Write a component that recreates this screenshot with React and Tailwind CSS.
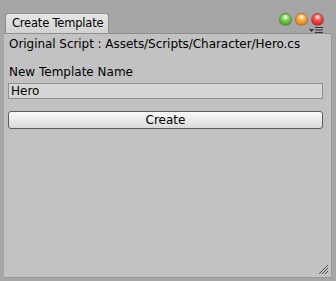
import { useState } from "react";

function Light({ from, to }) {
  return (
    <span
      className="w-[13px] h-[13px] rounded-full border border-[#6b6b6b]/60"
      style={{ background: `radial-gradient(circle at 50% 30%, #ffffff 0%, ${from} 35%, ${to} 100%)` }}
    />
  );
}

export default function App() {
  const [name, setName] = useState("Hero");

  return (
    <div
      className="w-[336px] h-[281px] bg-[#a6a6a6] flex flex-col text-[12px] text-black overflow-hidden"
      style={{ fontFamily: '"DejaVu Sans", Verdana, sans-serif' }}
    >
      {/* title strip */}
      <div className="h-[33px] flex items-end pl-[5px] pr-[5px] relative">
        <div className="h-[20px] pl-[6px] pr-[5px] text-[11.5px] tracking-[-0.2px] whitespace-nowrap flex items-center bg-gradient-to-b from-[#e6e6e6] to-[#d2d2d2] border border-b-0 border-[#8e8e8e] rounded-t-[3px]">
          Create Template
        </div>
        <div className="absolute right-[12px] top-[13px] flex gap-[3px]">
          <Light from="#7dd44a" to="#2f8a14" />
          <Light from="#ffb13b" to="#d0620a" />
          <Light from="#ff4f4f" to="#b30d0d" />
        </div>
        <div className="absolute right-[13px] top-[27px] flex items-center gap-[1px]">
          <svg width="5" height="3" viewBox="0 0 5 3"><path d="M0 0h5L2.5 3z" fill="#333" /></svg>
          <svg width="8" height="6" viewBox="0 0 8 6"><path d="M0 0.5h8M0 3h8M0 5.5h8" stroke="#333" strokeWidth="1" /></svg>
        </div>
      </div>

      {/* panel */}
      <div className="ml-[4px] mr-[5px] h-[244px] bg-[#c2c2c2] border-t border-[#8e8e8e] shadow-[1px_1px_0_#9a9a9a] flex flex-col pl-[4px] pr-[8px] relative">
        <div className="mt-[3px] pl-[1px] leading-[15px] whitespace-nowrap tracking-[-0.05px]">
          Original Script : Assets/Scripts/Character/Hero.cs
        </div>
        <div className="mt-[13px] pl-[1px] leading-[15px]">New Template Name</div>
        <input
          value={name}
          onChange={(e) => setName(e.target.value)}
          className="mt-[3px] h-[16px] px-[2px] bg-[#d6d6d6] border border-[#8f8f8f] outline-none leading-[14px]"
        />
        <button className="mt-[12px] h-[18px] rounded-[3px] border border-[#5a5a5a] bg-gradient-to-b from-[#fafafa] to-[#d9d9d9] leading-[16px]">
          Create
        </button>
        <svg className="absolute right-[2px] bottom-[2px]" width="11" height="11" viewBox="0 0 11 11">
          <path d="M10 1L1 10M10 4L4 10M10 7L7 10" stroke="#555" strokeWidth="1" />
        </svg>
      </div>
    </div>
  );
}
